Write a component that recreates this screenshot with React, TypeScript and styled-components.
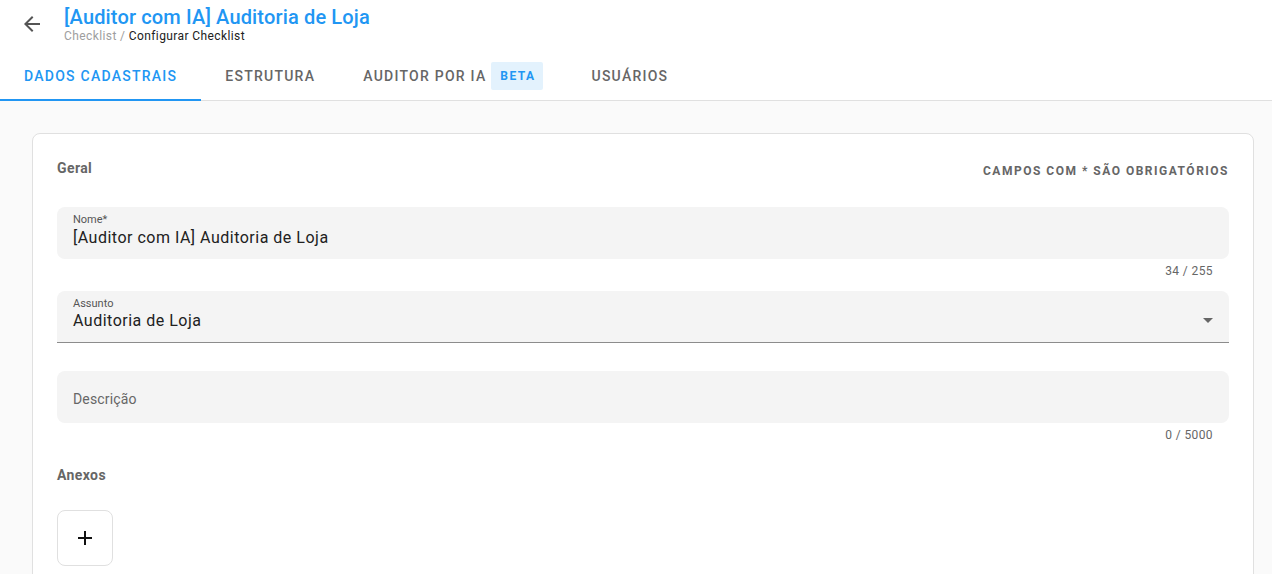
import React from "react";
import styled, { createGlobalStyle } from "styled-components";

const Global = createGlobalStyle`
  * { box-sizing: border-box; }
  html, body { margin: 0; padding: 0; background: #fafafa; font-family: Roboto, "Noto Sans", Arial, sans-serif; }
  #root { min-height: 100vh; }
`;

const Page = styled.div`
  width: 1272px;
  height: 574px;
  overflow: hidden;
  background: #fafafa;
`;

const TopBar = styled.div`
  background: #fff;
  border-bottom: 1px solid #e0e0e0;
`;

const HeaderRow = styled.div`
  display: flex;
  align-items: flex-start;
  padding: 5px 0 0 20px;
  height: 53px;
`;

const BackButton = styled.button`
  width: 24px;
  height: 24px;
  margin-top: 7px;
  margin-right: 20px;
  padding: 0;
  border: none;
  background: transparent;
  display: flex;
  align-items: center;
  justify-content: center;
  color: #555;
`;

const TitleBlock = styled.div`
  display: flex;
  flex-direction: column;
`;

const Title = styled.h1`
  margin: 0;
  font-size: 20px;
  line-height: 24px;
  font-weight: 500;
  letter-spacing: 0.15px;
  color: #2196f3;
`;

const Crumbs = styled.div`
  font-size: 12px;
  line-height: 14px;
  letter-spacing: 0.4px;
  color: #9e9e9e;
  span { color: #212121; }
`;

const Tabs = styled.div`
  display: flex;
  height: 47px;
`;

const Tab = styled.div<{ $active?: boolean }>`
  position: relative;
  display: flex;
  align-items: center;
  gap: 5px;
  padding: 0 24px 2px;
  font-size: 14px;
  font-weight: 500;
  letter-spacing: 1.25px;
  text-transform: uppercase;
  color: ${(p) => (p.$active ? "#2196f3" : "#666")};
  &::after {
    content: "";
    position: absolute;
    left: 0;
    right: 0;
    bottom: -1px;
    height: 2px;
    background: ${(p) => (p.$active ? "#2196f3" : "transparent")};
  }
`;

const Beta = styled.span`
  background: #e3f2fd;
  color: #2196f3;
  font-size: 12px;
  font-weight: 700;
  letter-spacing: 1.5px;
  width: 52px;
  text-align: center;
  padding-left: 1px;
  height: 28px;
  line-height: 28px;
  border-radius: 2px;
`;

const Content = styled.div`
  padding: 32px 18px 0 32px;
`;

const Card = styled.div`
  background: #fff;
  border: 1px solid #e0e0e0;
  border-radius: 8px;
  padding: 24px;
  min-height: 500px;
`;

const SectionHead = styled.div`
  display: flex;
  justify-content: space-between;
  align-items: flex-start;
  margin-bottom: 26px;
`;

const SectionTitle = styled.div`
  font-size: 14px;
  font-weight: 700;
  letter-spacing: 0.4px;
  color: #666;
  line-height: 20px;
`;

const Required = styled.div`
  font-size: 12px;
  font-weight: 700;
  letter-spacing: 1.5px;
  color: #666;
  line-height: 20px;
  margin-top: 3px;
`;

const Field = styled.div<{ $underline?: boolean }>`
  position: relative;
  height: 52px;
  background: #f4f4f4;
  border-radius: ${(p) => (p.$underline ? "8px 8px 0 0" : "8px")};
  border-bottom: ${(p) => (p.$underline ? "1px solid #8c8c8c" : "none")};
  padding: 6px 16px 0;
  display: flex;
  flex-direction: column;
`;

const FieldLabel = styled.div`
  font-size: 11px;
  line-height: 13px;
  color: #555;
`;

const FieldValue = styled.div<{ $lift?: number }>`
  font-size: 16px;
  line-height: 22px;
  letter-spacing: 0.5px;
  color: #212121;
  margin-top: ${(p) => 1 - (p.$lift ?? 0)}px;
`;

const Placeholder = styled.div`
  font-size: 14px;
  line-height: 20px;
  letter-spacing: 0.15px;
  color: #666;
  margin-top: 12px;
`;

const Arrow = styled.div`
  position: absolute;
  right: 16px;
  top: 27px;
  width: 0;
  height: 0;
  border-left: 5px solid transparent;
  border-right: 5px solid transparent;
  border-top: 5px solid #666;
`;

const Counter = styled.div`
  text-align: right;
  font-size: 12px;
  line-height: 14px;
  letter-spacing: 0.4px;
  color: #666;
  padding: 5px 16px 0 0;
  height: 32px;
`;

const Gap = styled.div<{ $h: number }>`
  height: ${(p) => p.$h}px;
`;

const AddButton = styled.button`
  width: 56px;
  height: 56px;
  border: 1px solid #e0e0e0;
  border-radius: 8px;
  background: #fff;
  display: flex;
  align-items: center;
  justify-content: center;
  padding: 0;
  margin-top: 25px;
`;

export default function App() {
  return (
    <Page>
      <Global />
      <TopBar>
        <HeaderRow>
          <BackButton aria-label="voltar">
            <svg width="24" height="24" viewBox="0 0 24 24">
              <path d="M20 11H7.83l5.59-5.59L12 4l-8 8 8 8 1.41-1.41L7.83 13H20v-2z" fill="#555" />
            </svg>
          </BackButton>
          <TitleBlock>
            <Title>[Auditor com IA] Auditoria de Loja</Title>
            <Crumbs>
              Checklist / <span>Configurar Checklist</span>
            </Crumbs>
          </TitleBlock>
        </HeaderRow>
        <Tabs>
          <Tab $active>Dados Cadastrais</Tab>
          <Tab>Estrutura</Tab>
          <Tab>
            Auditor por IA <Beta>BETA</Beta>
          </Tab>
          <Tab>Usuários</Tab>
        </Tabs>
      </TopBar>
      <Content>
        <Card>
          <SectionHead>
            <SectionTitle>Geral</SectionTitle>
            <Required>CAMPOS COM * SÃO OBRIGATÓRIOS</Required>
          </SectionHead>
          <Field>
            <FieldLabel>Nome*</FieldLabel>
            <FieldValue>[Auditor com IA] Auditoria de Loja</FieldValue>
          </Field>
          <Counter>34 / 255</Counter>
          <Field $underline>
            <FieldLabel>Assunto</FieldLabel>
            <FieldValue $lift={1}>Auditoria de Loja</FieldValue>
            <Arrow />
          </Field>
          <Gap $h={28} />
          <Field>
            <Placeholder>Descrição</Placeholder>
          </Field>
          <Counter>0 / 5000</Counter>
          <Gap $h={10} />
          <SectionTitle>Anexos</SectionTitle>
          <AddButton aria-label="adicionar">
            <svg width="24" height="24" viewBox="0 0 24 24">
              <path d="M19 13h-6v6h-2v-6H5v-2h6V5h2v6h6v2z" fill="#111" />
            </svg>
          </AddButton>
        </Card>
      </Content>
    </Page>
  );
}
